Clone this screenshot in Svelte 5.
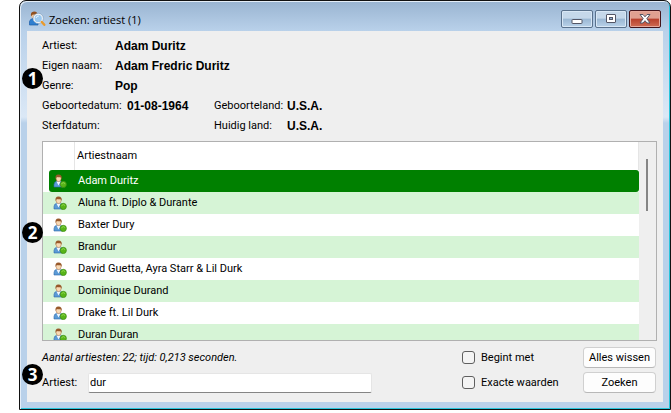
<script>
  const artists = [
    'Adam Duritz',
    'Aluna ft. Diplo & Durante',
    'Baxter Dury',
    'Brandur',
    'David Guetta, Ayra Starr & Lil Durk',
    'Dominique Durand',
    'Drake ft. Lil Durk',
    'Duran Duran'
  ];
  let selected = $state(0);
  let query = $state('dur');
</script>

{#snippet person()}
  <svg class="person" viewBox="0 0 14 14" width="14" height="14" aria-hidden="true">
    <path d="M1 13V10.5Q1.2 7.8 3.6 7.3L7.4 7.2Q10 8 10 10.5V13Z" fill="#5b9ad6" stroke="#2c68a8" stroke-width=".6" />
    <path d="M3.4 7.4L5.6 11.4L7.7 7.2Z" fill="#f4f8ff" />
    <ellipse cx="5.6" cy="4.6" rx="2.5" ry="3" fill="#f9d9b4" stroke="#a8683a" stroke-width=".5" />
    <path d="M2.6 5Q1.8 .4 5.4.4Q9.4.4 8.7 5L7.9 3.3Q5 3.5 3.6 2.9Z" fill="#98592a" />
    <circle cx="10.3" cy="10.4" r="3.1" fill="#58b518" stroke="#3c8d12" stroke-width=".7" />
    <path d="M8.4 9.8Q10.2 7.4 12.2 9.6" stroke="#8fd84e" fill="none" />
  </svg>
{/snippet}

<main>
  <section class="window">
    <header>
      <svg width="17" height="16" viewBox="0 0 17 16" aria-hidden="true">
        <path d="M.5 14V10.5Q1 8 4 7.5L9 8V14Z" fill="#2f7fd0" stroke="#1e5ea8" stroke-width=".7" />
        <path d="M3.8 8L5.5 11L7 8Z" fill="#fff" />
        <circle cx="5.2" cy="4.8" r="2.7" fill="#f3c595" />
        <path d="M2 5.2Q1.2.8 5 .5Q9 .6 8.4 4L3.8 3.4Z" fill="#90501f" />
        <circle cx="9.2" cy="7.4" r="4.4" fill="#9bc9f0" stroke="#f4f8fc" stroke-width="1.5" />
        <circle cx="9.2" cy="7.4" r="5.1" fill="none" stroke="#6888a8" stroke-width=".5" />
        <path d="M7 7Q7.6 4.8 9.8 5" stroke="#e8f5ff" fill="none" />
        <path d="M12.8 11L15.3 13.8" stroke="#e99a2c" stroke-width="2.4" stroke-linecap="round" />
      </svg>
      <h1>Zoeken: artiest (1)</h1>
      <div class="controls">
        <button aria-label="Minimaliseren">
          <svg width="12" height="12" viewBox="0 0 12 12"><rect x="1" y="6.5" width="10" height="4" rx=".5" fill="#fff" stroke="#535666" /></svg>
        </button>
        <button aria-label="Maximaliseren">
          <svg width="12" height="12" viewBox="0 0 12 12"><rect x="1.5" y="1.5" width="9" height="8" rx=".5" fill="#fff" stroke="#535666" /><rect x="4.5" y="4.5" width="3" height="2" fill="#8fb0d2" stroke="#535666" /></svg>
        </button>
        <button class="close" aria-label="Sluiten">
          <svg width="12" height="12" viewBox="0 0 12 12"><path d="M1 1.5H4L6 3.8L8 1.5H11L7.8 5.7L11 10H8L6 7.7L4 10H1L4.2 5.7Z" fill="#fff" stroke="#535666" /></svg>
        </button>
      </div>
    </header>

    <div class="body">
      <div class="info">
        <span class="badge one">1</span>
        <dl class="wide">
          <dt>Artiest:</dt><dd>Adam Duritz</dd>
          <dt>Eigen naam:</dt><dd>Adam Fredric Duritz</dd>
          <dt>Genre:</dt><dd>Pop</dd>
        </dl>
        <dl class="pairs">
          <dt>Geboortedatum:</dt><dd>01-08-1964</dd>
          <dt>Geboorteland:</dt><dd>U.S.A.</dd>
          <dt>Sterfdatum:</dt><dd></dd>
          <dt>Huidig land:</dt><dd>U.S.A.</dd>
        </dl>
      </div>

      <div class="listwrap">
        <span class="badge two">2</span>
        <div class="list">
          <table>
            <thead>
              <tr><th class="icon"></th><th>Artiestnaam</th></tr>
            </thead>
            <tbody>
              {#each artists as name, i}
                <tr class:selected={i === selected} onclick={() => (selected = i)}>
                  <td class="icon">{@render person()}</td>
                  <td>{name}</td>
                </tr>
              {/each}
            </tbody>
          </table>
          <div class="scroll"><div class="thumb"></div></div>
        </div>
      </div>

      <form onsubmit={(e) => e.preventDefault()}>
        <span class="badge three">3</span>
        <div class="left">
          <p>Aantal artiesten: 22; tijd: 0,213 seconden.</p>
          <div class="field">
            <label for="artist">Artiest:</label>
            <input id="artist" type="text" bind:value={query} />
          </div>
        </div>
        <div class="checks">
          <label><input type="checkbox" />Begint met</label>
          <label><input type="checkbox" />Exacte waarden</label>
        </div>
        <div class="actions">
          <button type="button" onclick={() => (query = '')}>Alles wissen</button>
          <button type="submit">Zoeken</button>
        </div>
      </form>
    </div>
  </section>
</main>

<style>
  :global(body) {
    margin: 0;
    background: #fff;
  }
  main {
    padding-left: 19px;
    font: 11px/20px Roboto, "Liberation Sans", sans-serif;
    color: #000;
  }
  .window {
    box-sizing: border-box;
    border: 1px solid #111;
    border-radius: 7px 7px 0 0;
    padding: 0 7px 7px;
    background: linear-gradient(#99b4d1, #b9d1ea 30px, #dbe8f6 116px, #b9d1ea 122px);
    box-shadow: inset 1px 1px #e4eef8, inset -1px -1px #27c5dc;
  }
  header {
    display: flex;
    align-items: center;
    height: 30px;
    padding: 6px 2px 0;
    box-sizing: border-box;
  }
  header > svg {
    margin-right: 3px;
  }
  h1 {
    flex: 1;
    margin: 0;
    padding-top: 2px;
    font: 11px/20px "Open Sans", "Noto Sans", sans-serif;
  }
  .controls {
    display: flex;
    gap: 2px;
  }
  .controls button {
    display: flex;
    align-items: center;
    justify-content: center;
    width: 32px;
    height: 18px;
    padding: 0;
    border: 1px solid #59718c;
    border-radius: 2px;
    background: linear-gradient(#c5d8ea 45%, #9ab7d3 50%, #b9d2e9);
    box-shadow: inset 0 0 0 1px #d8e7f5;
  }
  .controls .close {
    border-color: #43141a;
    background: linear-gradient(#e0a090 45%, #b8402c 50%, #cf6c54);
    box-shadow: inset 0 0 0 1px #e6a99c;
  }
  .body {
    background: #efefef;
    padding: 5px 6px 9px 15px;
  }
  .info,
  .listwrap,
  form {
    position: relative;
  }
  dl {
    display: grid;
    margin: 0;
  }
  dt,
  dd {
    margin: 0;
    height: 20px;
    white-space: nowrap;
  }
  dd {
    font: bold 12px/20px "Liberation Sans", Arial, sans-serif;
  }
  .wide {
    grid-template-columns: 73px 1fr;
  }
  .pairs {
    grid-template-columns: 85px 87px 73px 1fr;
  }
  .badge {
    position: absolute;
    left: -20px;
    width: 21px;
    height: 21px;
    border-radius: 50%;
    background: #000;
    color: #fff;
    font: bold 17px/21px "Open Sans", sans-serif;
    text-align: center;
  }
  .one {
    top: 32px;
  }
  .two {
    top: 81px;
  }
  .three {
    top: 17px;
  }
  .list {
    display: flex;
    box-sizing: border-box;
    height: 200px;
    margin-top: 5px;
    border: 1px solid #b0b0b0;
    background: #fff;
    overflow: hidden;
  }
  table {
    flex: 1;
    align-self: flex-start;
    border-collapse: separate;
    border-spacing: 0;
  }
  th {
    height: 28px;
    padding: 0 0 0 2px;
    font-weight: normal;
    text-align: left;
    border-right: 1px solid #e5e5e5;
  }
  td {
    height: 22px;
    padding: 0 0 0 3px;
  }
  .icon {
    box-sizing: border-box;
    width: 32px;
    padding: 0;
  }
  td.icon {
    padding-left: 10px;
  }
  .person {
    display: block;
  }
  tbody tr:nth-child(even) td {
    background: #d6f4d6;
  }
  tbody .selected td {
    background: #008000;
    color: #fff;
  }
  .selected td:first-child {
    clip-path: inset(0 0 0 6px round 3px 0 0 3px);
  }
  .selected td:last-child {
    border-radius: 0 3px 3px 0;
  }
  .scroll {
    width: 17px;
    background: #efefef;
  }
  .thumb {
    width: 2px;
    height: 52px;
    margin: 17px 0 0 7px;
    background: #858585;
  }
  form {
    display: flex;
    margin-top: 6px;
    padding-right: 1px;
  }
  .left,
  .checks,
  .actions {
    display: flex;
    flex-direction: column;
    gap: 4px;
  }
  .left {
    flex: 1;
  }
  p {
    margin: 0;
    height: 21px;
    line-height: 21px;
    font-style: italic;
  }
  .field {
    display: flex;
    align-items: center;
    height: 21px;
  }
  .field label {
    width: 46px;
  }
  .field input {
    flex: 1;
    box-sizing: border-box;
    min-width: 0;
    height: 20px;
    margin-right: 90px;
    padding: 0 1px;
    border: 1px solid #e5e5e5;
    border-bottom-color: #858585;
    border-radius: 2px;
    background: #fff;
    font: inherit;
    outline: none;
  }
  .checks {
    width: 121px;
  }
  .checks label {
    display: flex;
    align-items: center;
    height: 21px;
  }
  .checks input {
    appearance: none;
    box-sizing: border-box;
    width: 13px;
    height: 13px;
    margin: 0 6px 0 0;
    border: 1px solid #5f5f5f;
    border-radius: 3px;
    background: #f4f4f4;
  }
  .checks input:checked {
    background: #008000;
  }
  .actions button {
    width: 73px;
    height: 21px;
    padding: 0;
    border: 1px solid #d0d0d0;
    border-bottom-color: #b8b8b8;
    border-radius: 4px;
    background: #fdfdfd;
    color: #000;
    font: 11px/18px Roboto, "Liberation Sans", sans-serif;
  }
</style>
